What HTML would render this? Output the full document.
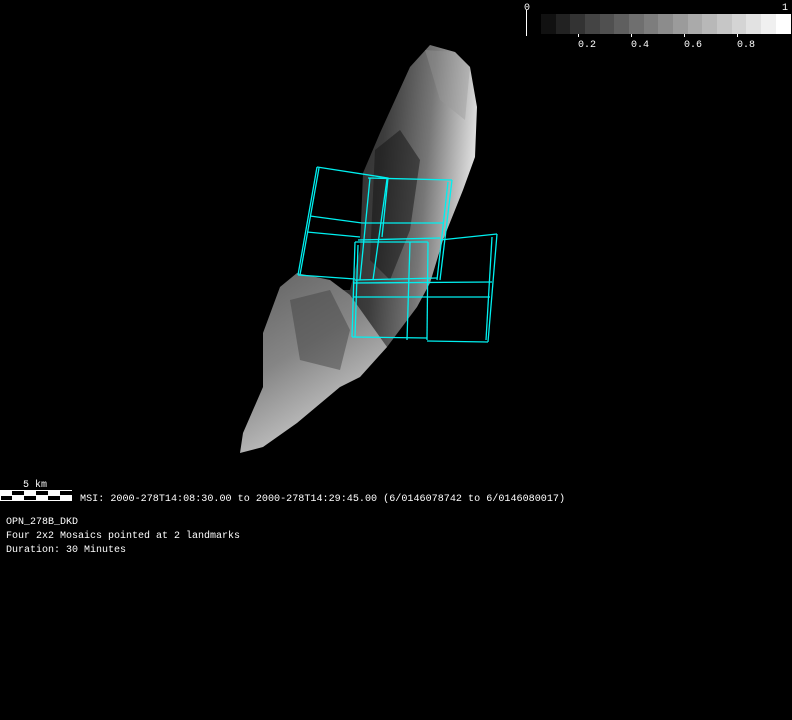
<!DOCTYPE html>
<html><head><style>html,body{margin:0;padding:0;background:#000;width:792px;height:720px;overflow:hidden}</style></head>
<body>
<svg width="792" height="720" viewBox="0 0 792 720" xmlns="http://www.w3.org/2000/svg" style="display:block">
<defs>
<linearGradient id="g" x1="0" y1="0" x2="1" y2="0.2">
<stop offset="0" stop-color="#222"/><stop offset="0.4" stop-color="#3c3c3c"/><stop offset="0.7" stop-color="#777"/><stop offset="0.9" stop-color="#bbb"/><stop offset="1" stop-color="#ddd"/>
</linearGradient>
<linearGradient id="g2" x1="0" y1="0" x2="0.5" y2="1">
<stop offset="0" stop-color="#606060"/><stop offset="0.5" stop-color="#858585"/><stop offset="1" stop-color="#cfcfcf"/>
</linearGradient>
</defs>
<rect width="792" height="720" fill="#000"/>
<polygon fill="url(#g)" points="430,45 455,52 470,67 477,107 475,157 463,190 443,240 430,283 417,307 387,347 360,377 340,387 330,290 350,290 360,250 363,173 380,133 410,67"/>
<polygon fill="url(#g2)" points="360,377 340,387 297,423 263,447 240,453 243,433 263,387 263,333 280,287 297,273 330,280 350,295 387,347"/>
<polygon fill="#444" opacity="0.5" points="290,300 330,290 350,330 340,370 300,360"/>
<polygon fill="#111" opacity="0.5" points="375,150 400,130 420,160 410,230 390,280 370,260"/>
<polygon fill="#999" opacity="0.4" points="425,50 455,52 470,67 465,120 440,100"/>
<g fill="none" stroke="#00f0f0" stroke-width="1.3">
<polyline points="317,167 388,178 382,237"/>
<line x1="317" y1="167" x2="298" y2="275"/><line x1="319" y1="168" x2="300" y2="275"/>
<line x1="310" y1="216" x2="362" y2="223"/><line x1="307" y1="232" x2="360" y2="237"/>
<line x1="298" y1="275" x2="355" y2="279"/>
<line x1="370" y1="178" x2="360" y2="280"/><line x1="387" y1="179" x2="373" y2="280"/>
<line x1="368" y1="178" x2="452" y2="180"/><line x1="452" y1="180" x2="440" y2="280"/><line x1="448" y1="182" x2="437" y2="280"/>
<line x1="362" y1="223" x2="443" y2="223"/><line x1="358" y1="240" x2="440" y2="238"/>
<line x1="355" y1="280" x2="437" y2="278"/>
<line x1="355" y1="242" x2="428" y2="242"/><line x1="410" y1="242" x2="407" y2="340"/><line x1="428" y1="242" x2="427" y2="340"/>
<line x1="440" y1="240" x2="497" y2="234"/><line x1="497" y1="234" x2="488" y2="342"/><line x1="492" y1="237" x2="486" y2="340"/>
<line x1="353" y1="283" x2="492" y2="282"/><line x1="353" y1="297" x2="490" y2="297"/>
<line x1="352" y1="337" x2="427" y2="338"/><line x1="427" y1="341" x2="488" y2="342"/>
<line x1="355" y1="242" x2="352" y2="337"/><line x1="358" y1="245" x2="355" y2="337"/>
</g>
<line x1="526.5" y1="10" x2="526.5" y2="36" stroke="#fff"/>
<g>
<rect x="541" y="14" width="15" height="20" fill="#111"/><rect x="556" y="14" width="15" height="20" fill="#222"/><rect x="570" y="14" width="15" height="20" fill="#333"/><rect x="585" y="14" width="15" height="20" fill="#444"/><rect x="600" y="14" width="15" height="20" fill="#505050"/><rect x="614" y="14" width="15" height="20" fill="#5f5f5f"/><rect x="629" y="14" width="15" height="20" fill="#6f6f6f"/><rect x="644" y="14" width="15" height="20" fill="#7d7d7d"/><rect x="658" y="14" width="15" height="20" fill="#8c8c8c"/><rect x="673" y="14" width="15" height="20" fill="#9b9b9b"/><rect x="688" y="14" width="15" height="20" fill="#aaa"/><rect x="702" y="14" width="15" height="20" fill="#b8b8b8"/><rect x="717" y="14" width="15" height="20" fill="#c6c6c6"/><rect x="732" y="14" width="15" height="20" fill="#d4d4d4"/><rect x="746" y="14" width="15" height="20" fill="#e2e2e2"/><rect x="761" y="14" width="15" height="20" fill="#f0f0f0"/><rect x="776" y="14" width="15" height="20" fill="#fff"/>
</g>
<g stroke="#fff"><line x1="578.5" y1="34" x2="578.5" y2="37"/><line x1="631.5" y1="34" x2="631.5" y2="37"/><line x1="684.5" y1="34" x2="684.5" y2="37"/><line x1="737.5" y1="34" x2="737.5" y2="37"/></g>
<g fill="#fff" font-family="Liberation Mono, monospace" font-size="10">
<text x="524" y="10">0</text><text x="782" y="10">1</text>
<text x="578" y="47">0.2</text><text x="631" y="47">0.4</text><text x="684" y="47">0.6</text><text x="737" y="47">0.8</text>
<text x="23" y="487">5 km</text>
<text x="80" y="501" textLength="485" lengthAdjust="spacingAndGlyphs">MSI:  2000-278T14:08:30.00 to 2000-278T14:29:45.00 (6/0146078742 to 6/0146080017)</text>
<text x="6" y="524">OPN_278B_DKD</text>
<text x="6" y="538" textLength="234" lengthAdjust="spacingAndGlyphs">Four 2x2 Mosaics pointed at 2 landmarks</text>
<text x="6" y="552">Duration: 30 Minutes</text>
</g>
<rect x="0" y="490" width="72" height="11" fill="#fff"/>
<g fill="#000"><rect x="12" y="491" width="12" height="4"/><rect x="36" y="491" width="12" height="4"/><rect x="60" y="491" width="12" height="4"/>
<rect x="1" y="496" width="11" height="4"/><rect x="24" y="496" width="12" height="4"/><rect x="48" y="496" width="12" height="4"/></g>
</svg>
</body></html>
